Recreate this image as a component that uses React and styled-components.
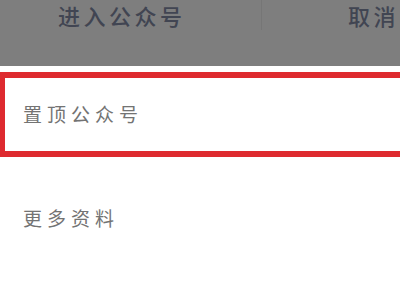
import React from "react";
import styled, { createGlobalStyle } from "styled-components";

const Global = createGlobalStyle`
  html, body { margin: 0; padding: 0; background: #ffffff; }
  body { width: 400px; height: 300px; overflow: hidden; }
`;

const Page = styled.div`
  width: 400px;
  height: 300px;
  display: flex;
  flex-direction: column;
  font-family: "Noto Sans CJK SC", "Noto Sans", sans-serif;
  overflow: hidden;
`;

const Overlay = styled.div`
  height: 66px;
  background: #7e7e7e;
  display: flex;
  align-items: flex-start;
  flex-shrink: 0;
`;

const ActionButton = styled.div`
  width: ${(p) => p.$w}px;
  height: 26px;
  flex-shrink: 0;
  padding-top: 4px;
  padding-left: ${(p) => p.$pl || 0}px;
  box-sizing: content-box;
  font-size: 22px;
  line-height: 22px;
  font-weight: 500;
  letter-spacing: 3.5px;
  color: #414552;
  border-right: ${(p) => (p.$divider ? "1px solid #767676" : "none")};
  white-space: nowrap;
`;

const Sheet = styled.div`
  flex: 1;
  background: #ffffff;
  padding-top: 6px;
  display: flex;
  flex-direction: column;
`;

const Highlight = styled.div`
  height: 85px;
  width: 420px;
  box-sizing: border-box;
  border: 6px solid #de2a2f;
  border-left-width: 5px;
  display: flex;
  align-items: center;
  padding-left: 18px;
  padding-bottom: 2px;
`;

const Item = styled.div`
  height: 120px;
  display: flex;
  align-items: center;
  padding-left: 23px;
`;

const Label = styled.span`
  font-size: 19px;
  letter-spacing: 5px;
  color: #737373;
  font-weight: 400;
`;

export default function App() {
  return (
    <Page>
      <Global />
      <Overlay>
        <ActionButton $w={203} $divider $pl={58}>
          进入公众号
        </ActionButton>
        <ActionButton $w={53} $pl={86}>
          取消
        </ActionButton>
      </Overlay>
      <Sheet>
        <Highlight>
          <Label>置顶公众号</Label>
        </Highlight>
        <Item>
          <Label>更多资料</Label>
        </Item>
      </Sheet>
    </Page>
  );
}
